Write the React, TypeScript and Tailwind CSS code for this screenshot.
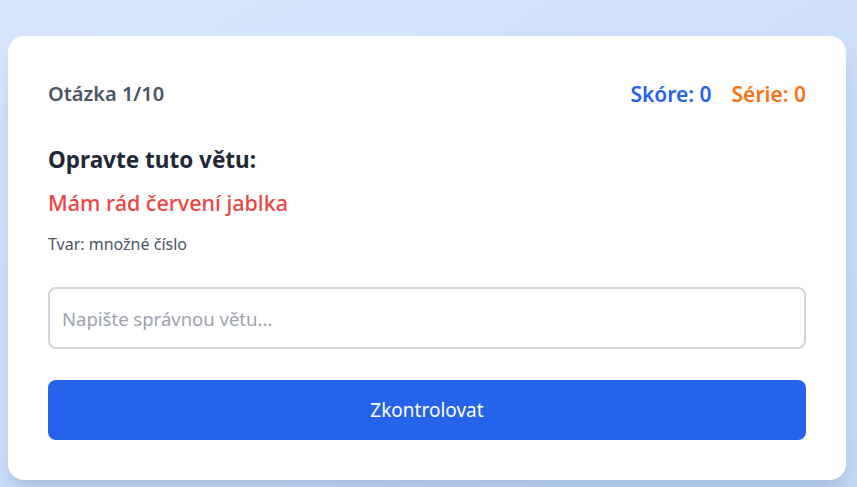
import React from "react";

export default function App() {
  return (
    <div
      className="min-h-[487px] w-full bg-gradient-to-br from-[#d8e7fd] to-[#c3d8f6] pt-[36px] pl-[8px] pr-[11px] pb-[8px]"
      style={{ fontFamily: '"Noto Sans", "Open Sans", sans-serif' }}
    >
      <div className="rounded-2xl bg-white px-10 pt-[44px] pb-10 shadow-xl shadow-[#9db5d8]/60">
        <div className="flex h-[28px] items-center justify-between">
          <span className="text-xl leading-[28px] font-semibold text-[#4b5563]">Otázka 1/10</span>
          <div className="flex gap-5 text-[21px] leading-[28px] font-semibold">
            <span className="text-[#2563eb]">Skóre: 0</span>
            <span className="text-[#f97316]">Série: 0</span>
          </div>
        </div>
        <h2 className="mt-[36px] text-[22.5px] leading-[32px] font-bold text-[#1f2937]">Opravte tuto větu:</h2>
        <p className="mt-[13px] text-[21.5px] leading-[28px] font-medium text-[#ef4444]">Mám rád červení jablka</p>
        <p className="mt-[15px] text-base leading-[24px] text-[#4b5563]">Tvar: množné číslo</p>
        <input
          type="text"
          placeholder="Napište správnou větu..."
          className="mt-[31px] block h-[62px] w-full rounded-lg border-2 border-[#d1d5db] px-3 text-[18.5px] text-[#1f2937] placeholder:text-[#9ca3af] outline-none"
        />
        <button className="mt-[31px] block h-[60px] w-full rounded-lg bg-[#2563eb] text-[19px] text-white">
          Zkontrolovat
        </button>
      </div>
    </div>
  );
}
